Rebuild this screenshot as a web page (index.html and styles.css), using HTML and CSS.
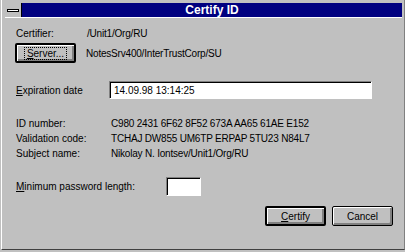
FILE: index.html
```html
<html>
<head>
    <title>Certify ID</title>
    <link rel="stylesheet" href="styles.css">
</head>
<body>
    <div class="window">
        <div class="titlebar">
            <div class="sysmenu"><span class="sysbar"></span></div>
            <div class="caption">Certify ID</div>
        </div>
        <div class="content">
            <div class="row first">
                <span class="label">Certifier:</span>
                <span class="value">/Unit1/Org/RU</span>
            </div>
            <div class="row server-row">
                <button class="btn default server"><span class="focus"><u>S</u>erver...</span></button>
                <span class="value">NotesSrv400/InterTrustCorp/SU</span>
            </div>
            <div class="row exp-row">
                <span class="label"><u>E</u>xpiration date</span>
                <div class="field wide">14.09.98 13:14:25</div>
            </div>
            <div class="info">
                <div class="row">
                    <span class="label">ID number:</span>
                    <span class="value2">C980 2431 6F62 8F52 673A AA65 61AE E152</span>
                </div>
                <div class="row">
                    <span class="label">Validation code:</span>
                    <span class="value2">TCHAJ DW855 UM6TP ERPAP 5TU23 N84L7</span>
                </div>
                <div class="row">
                    <span class="label">Subject name:</span>
                    <span class="value2">Nikolay N. Iontsev/Unit1/Org/RU</span>
                </div>
            </div>
            <div class="row pass-row">
                <span class="label long"><u>M</u>inimum password length:</span>
                <div class="field small"></div>
            </div>
            <div class="buttons">
                <button class="btn default"><u>C</u>ertify</button>
                <button class="btn">Cancel</button>
            </div>
        </div>
    </div>
</body>
</html>
```
FILE: styles.css
```css
*{
    margin: 0;
    box-sizing: border-box;
}
body{
    background-color: #c0c0c0;
    font-family: "Liberation Sans", Arial, sans-serif;
    font-size: 10px;
    color: #000;
    width: 405px;
    height: 252px;
    overflow: hidden;
}
u{
    text-decoration: underline;
}
.window{
    height: 250px;
    border-left: 1px solid #fff;
    border-bottom: 1px solid #404040;
    border-right: 1px solid #808080;
    margin-left: 1px;
    padding: 3px 2px 0 3px;
}
.titlebar{
    display: flex;
    height: 15px;
    border-bottom: 1px solid #fff;
}
.sysmenu{
    width: 17px;
    height: 14px;
    background-color: #c0c0c0;
    border-right: 1px solid #000;
    display: flex;
    align-items: center;
    justify-content: center;
}
.sysbar{
    width: 12px;
    height: 3px;
    background-color: #fff;
    border: 1px solid #000;
    margin-top: 1px;
}
.caption{
    flex: 1;
    height: 14px;
    background-color: #000080;
    color: #fff;
    font-weight: bold;
    font-size: 12px;
    line-height: 14px;
    text-align: center;
}
.content{
    padding-left: 11px;
}
.row{
    display: flex;
    align-items: center;
    height: 14px;
    white-space: nowrap;
}
.label{
    width: 71px;
}
.value,.value2{
    letter-spacing: -0.2px;
}
.first{
    margin-top: 8px;
}
.server-row{
    margin-top: 3px;
    height: 20px;
}
.server{
    width: 62px;
    margin-left: -1px;
    margin-right: 10px;
}
.focus{
    border: 1px dotted #000;
    padding: 0 2px;
}
.exp-row{
    margin-top: 18px;
    height: 18px;
}
.exp-row .label{
    width: 93px;
}
.field{
    background-color: #fff;
    border: 1px solid;
    border-color: #808080 #fff #fff #808080;
    box-shadow: inset 1px 1px #000;
    padding: 2px 4px;
    font-size: 10px;
    line-height: 13px;
}
.wide{
    width: 263px;
    height: 18px;
}
.info{
    margin-top: 17px;
}
.info .row{
    height: 15px;
}
.info .label{
    width: 95px;
}
.pass-row{
    margin-top: 16px;
    height: 19px;
}
.pass-row .label{
    width: 150px;
}
.small{
    width: 35px;
    height: 19px;
}
.buttons{
    display: flex;
    justify-content: flex-end;
    gap: 6px;
    margin-top: 10px;
    padding-right: 9px;
}
.btn{
    width: 61px;
    height: 20px;
    background-color: #c0c0c0;
    border: 1px solid #000;
    border-radius: 2px;
    box-shadow: inset 1px 1px #fff, inset -1px -1px #808080, inset -2px -2px #808080;
    font-family: "Liberation Sans", Arial, sans-serif;
    font-size: 10px;
    color: #000;
    padding: 0;
}
.btn.default{
    border-width: 2px;
}
```
